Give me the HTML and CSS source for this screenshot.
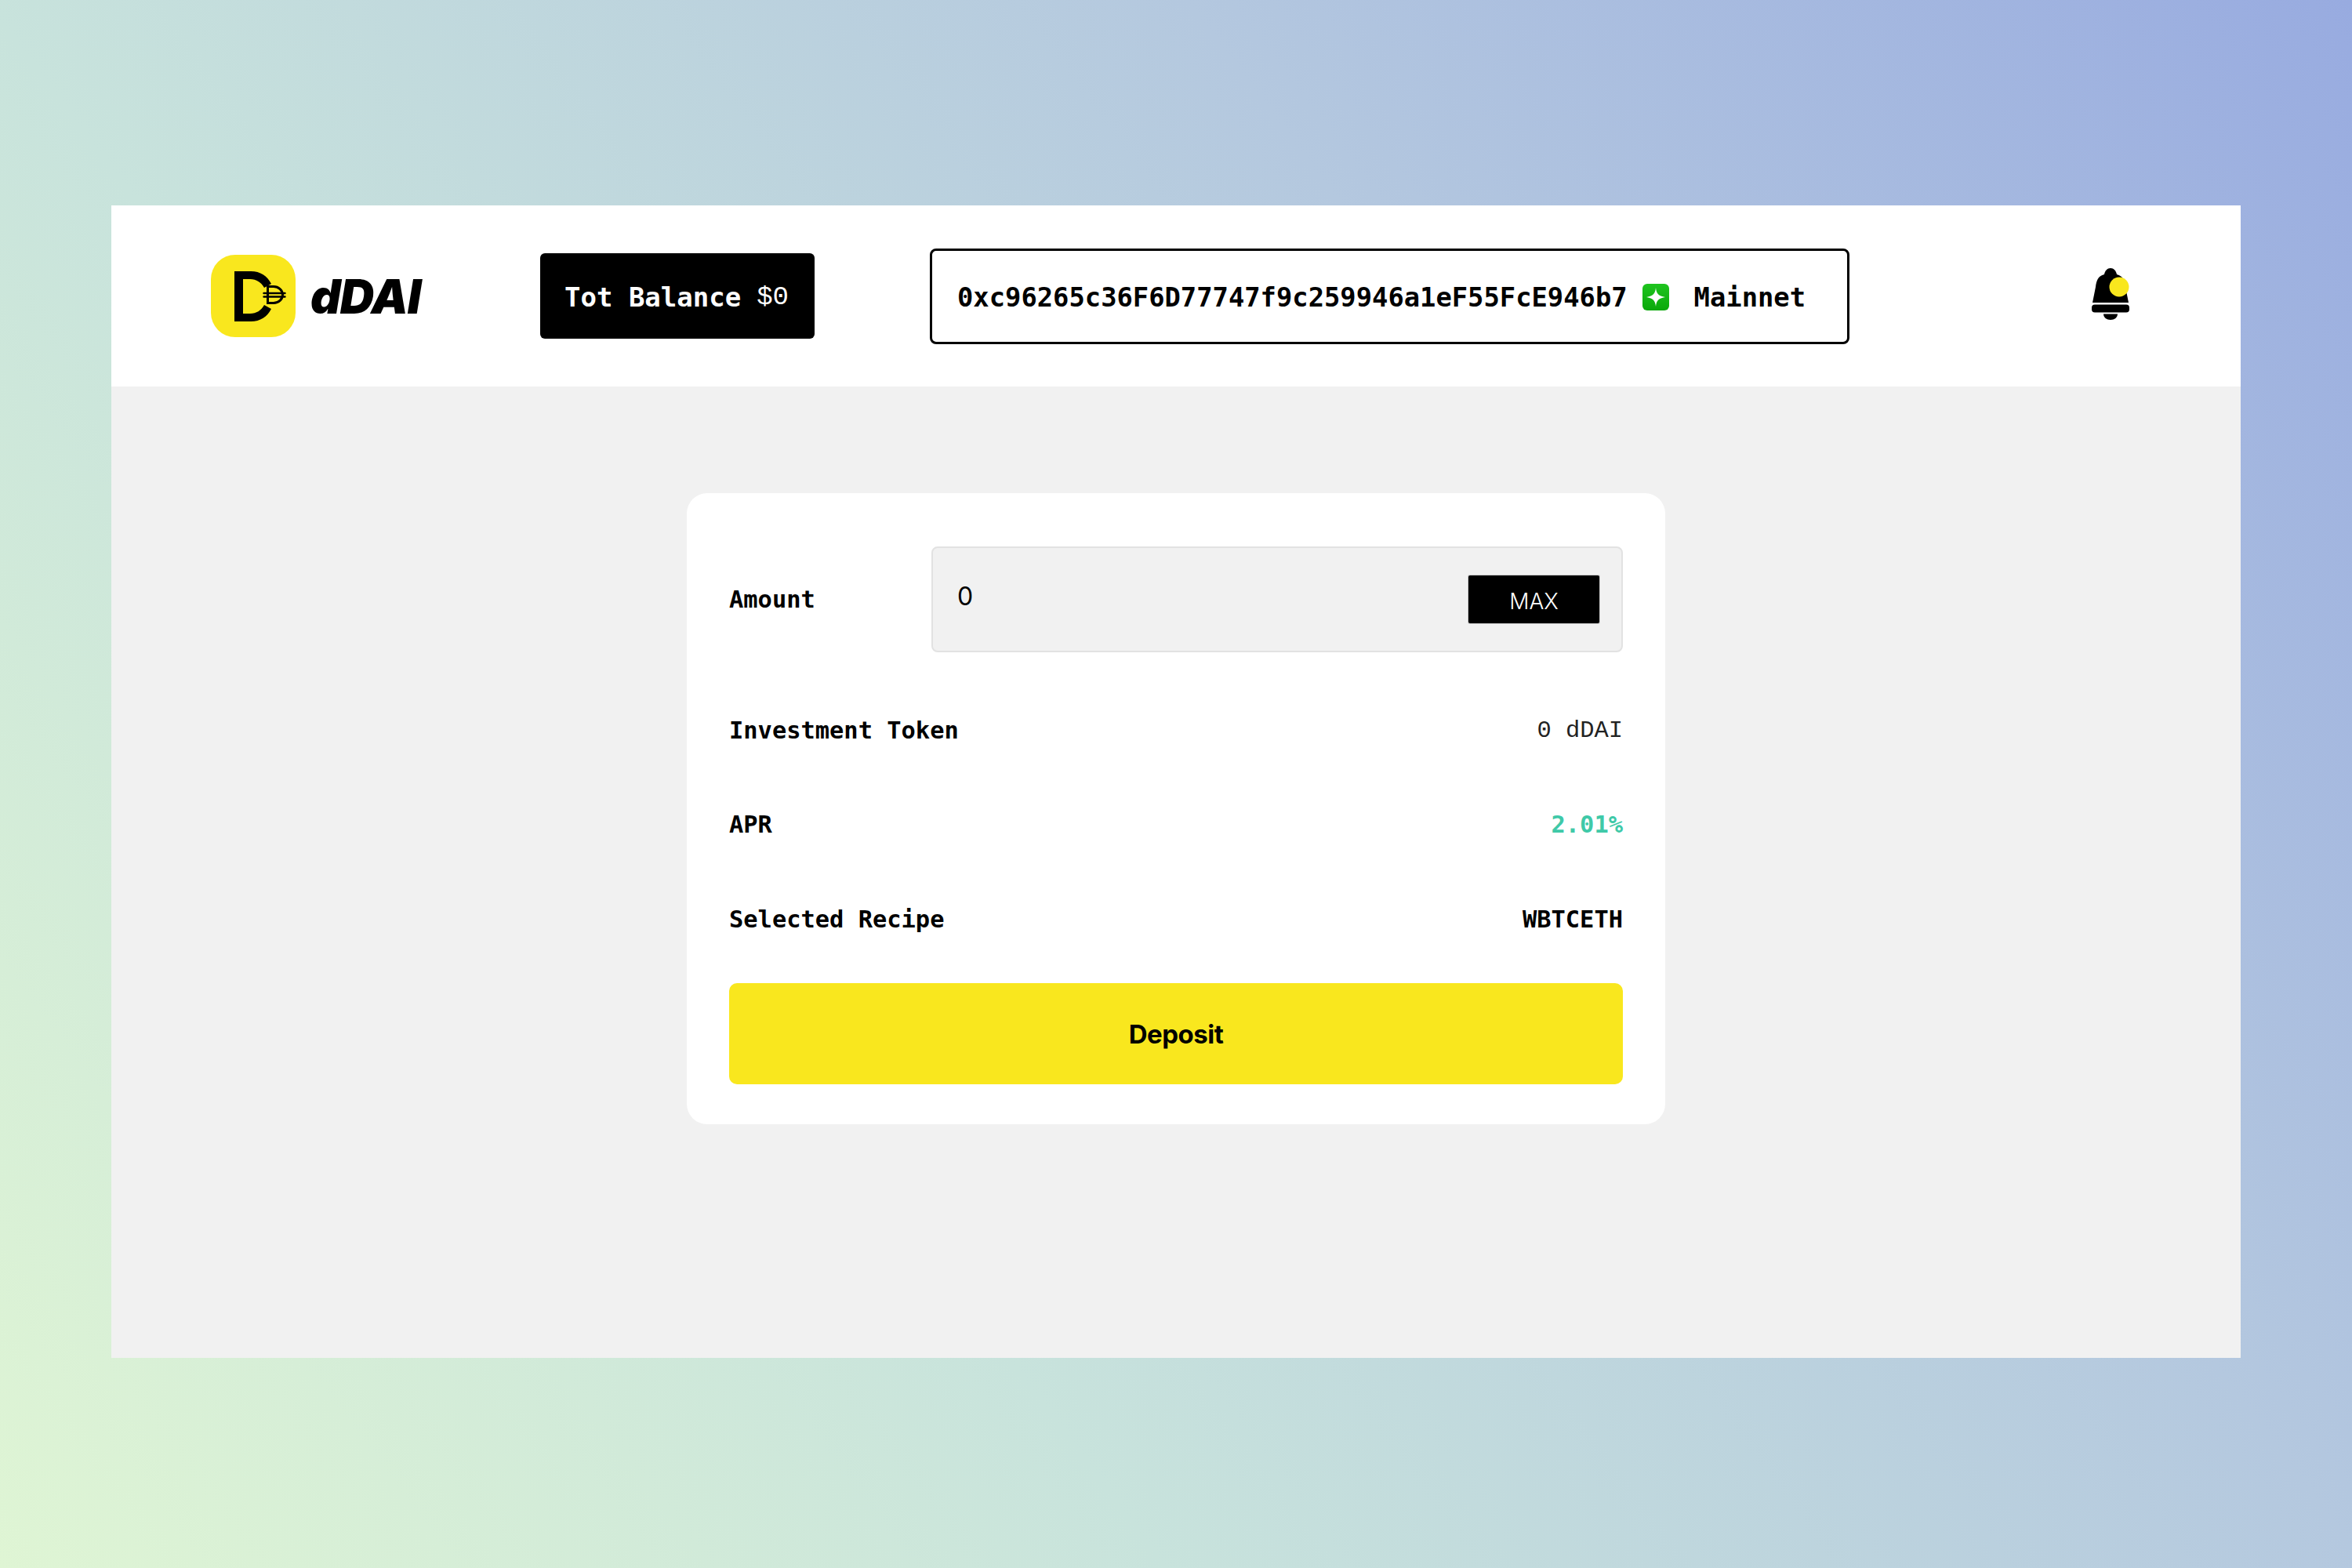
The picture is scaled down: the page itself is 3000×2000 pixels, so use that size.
FILE: index.html
```html
<!DOCTYPE html>
<html lang="en">
<head>
<meta charset="utf-8">
<title>dDAI</title>
<link rel="stylesheet" href="styles.css">
</head>
<body>
<main class="window">
  <header class="header">
    <div class="brand">
      <svg class="logo" viewBox="0 0 108 105" aria-hidden="true">
        <rect width="108" height="105" rx="31" fill="#f9e71e"/>
        <path d="M30 21H51C63 21 72 27 77 37L68 42C64 35 58 31 50 31H41V75H50C58 75 64 71 68 64L77 69C72 79 63 85 51 85H30Z" fill="#000"/>
        <path d="M72.500 40.500H80A11.500 10.500 0 0 1 80 61.500H72.500Z" fill="none" stroke="#000" stroke-width="3"/>
        <path d="M67.500 49H94.500M67.500 53.500H94.500" stroke="#000" stroke-width="2.400" stroke-linecap="round"/>
      </svg>
      <span class="brand-name">dDAI</span>
    </div>
    <div class="balance"><span class="balance-label">Tot Balance</span> <span class="balance-value">$0</span></div>
    <div class="wallet">
      <span class="address">0xc96265c36F6D77747f9c259946a1eF55FcE946b7</span>
      <svg class="network-icon" viewBox="0 0 34 34" aria-hidden="true">
        <defs>
          <linearGradient id="net" x1="0" y1="0" x2="0" y2="1">
            <stop offset="0" stop-color="#1fc41f"/>
            <stop offset="1" stop-color="#0aa80a"/>
          </linearGradient>
        </defs>
        <rect width="34" height="34" rx="6" fill="url(#net)"/>
        <path d="M17 5C18 13 20 15 29 17C20 19 18 21 17 29C16 21 14 19 5 17C14 15 16 13 17 5Z" fill="#fff"/>
      </svg>
      <span class="network">Mainnet</span>
    </div>
    <svg class="bell" viewBox="0 0 48 66" aria-hidden="true">
      <path d="M16 8C17 3 20 0 24 0S31 3 32 8C40 10 42 16 43 24L47 44H1L5 24C6 16 8 10 16 8Z" fill="#000"/>
      <rect x="0" y="46.500" width="48" height="10" rx="4" fill="#000"/>
      <path d="M15 58.500H33C33 63 29 66 24 66S15 63 15 58.500Z" fill="#000"/>
      <circle cx="35" cy="24" r="12.500" fill="#f9e71e"/>
    </svg>
  </header>
  <section class="content">
    <div class="card">
      <div class="amount-row">
        <span class="label">Amount</span>
        <div class="amount-field">
          <span class="amount-value">0</span>
          <button class="max" type="button">MAX</button>
        </div>
      </div>
      <div class="row row-first"><span class="label">Investment Token</span><span class="value-light">0 dDAI</span></div>
      <div class="row"><span class="label">APR</span><span class="value-apr">2.01%</span></div>
      <div class="row"><span class="label">Selected Recipe</span><span class="value-strong">WBTCETH</span></div>
      <button class="deposit" type="button">Deposit</button>
    </div>
  </section>
</main>
</body>
</html>
```
FILE: styles.css
```css
* { box-sizing: border-box; }
html, body { margin: 0; height: 100%; }
body {
  width: 3000px;
  height: 2000px;
  padding: 262px 142px 268px;
  background: linear-gradient(53deg, #dff5d4 0%, #c8e3dc 33%, #b4c8df 67%, #98abe0 100%);
  font-family: "DejaVu Sans Mono", "Liberation Mono", monospace;
  color: #000;
}
.window { height: 1470px; display: flex; flex-direction: column; background: #f1f1f1; }
.header {
  height: 231px;
  flex: none;
  display: flex;
  align-items: center;
  padding: 0 142px 0 127px;
  background: #fff;
}
.brand { display: flex; align-items: center; gap: 19px; width: 420px; flex: none; }
.logo { width: 108px; height: 105px; flex: none; }
.brand-name { font: italic 900 60px "Inter", sans-serif; letter-spacing: -1px; }
.balance {
  width: 350px;
  height: 109px;
  flex: none;
  display: flex;
  align-items: center;
  gap: 20px;
  padding: 2px 0 0 31px;
  background: #000;
  color: #fff;
  border-radius: 6px;
  font-size: 34px;
}
.balance-label { font-weight: 700; }
.balance-value { font-family: "Liberation Mono", monospace; }
.wallet {
  width: 1173px;
  height: 122px;
  margin-left: 147px;
  flex: none;
  display: flex;
  align-items: center;
  padding: 0 0 0 32px;
  border: 3px solid #000;
  border-radius: 8px;
  font-size: 33.8px;
  font-weight: 700;
}
.address { padding-top: 4px; }
.network-icon { width: 34px; height: 34px; margin-left: 19px; flex: none; margin-top: 2px; }
.network { margin-left: 32px; padding-top: 4px; }
.bell { width: 48px; height: 66px; flex: none; margin-left: auto; margin-top: -5px; }
.content { flex: 1; display: flex; justify-content: center; padding-top: 136px; }
.card {
  width: 1248px;
  height: 805px;
  padding: 68px 54px 50px;
  display: flex;
  flex-direction: column;
  background: #fff;
  border-radius: 26px;
}
.amount-row { display: flex; align-items: center; justify-content: space-between; height: 135px; flex: none; }
.label { font-size: 30.4px; font-weight: 700; }
.amount-field {
  width: 882px;
  height: 135px;
  display: flex;
  align-items: center;
  justify-content: space-between;
  padding: 0 28px 0 31px;
  background: #f1f1f1;
  border: 2px solid #e2e2e2;
  border-radius: 8px;
}
.amount-value { font: 400 32px "Inter", sans-serif; margin-top: -8px; }
.max {
  width: 167px;
  height: 61px;
  padding: 4px 0 0;
  background: #000;
  color: #fff;
  border: 0;
  border-radius: 2px;
  box-shadow: 0 0 0 1px #c8c8c8;
  font: 300 28px "Inter", sans-serif;
}
.row { height: 121px; flex: none; display: flex; align-items: center; justify-content: space-between; font-size: 30.4px; }
.row-first { margin-top: 38px; padding-top: 2px; }
.value-light { font-family: "Liberation Mono", monospace; color: #222; }
.value-apr { font-weight: 700; color: #3fc9a8; }
.value-strong { font-weight: 700; }
.deposit {
  height: 129px;
  margin-top: 21px;
  flex: none;
  background: #f9e71e;
  border: 0;
  border-radius: 10px;
  color: #000;
  font: 700 33px "Inter", sans-serif;
  letter-spacing: -0.5px;
}
```
